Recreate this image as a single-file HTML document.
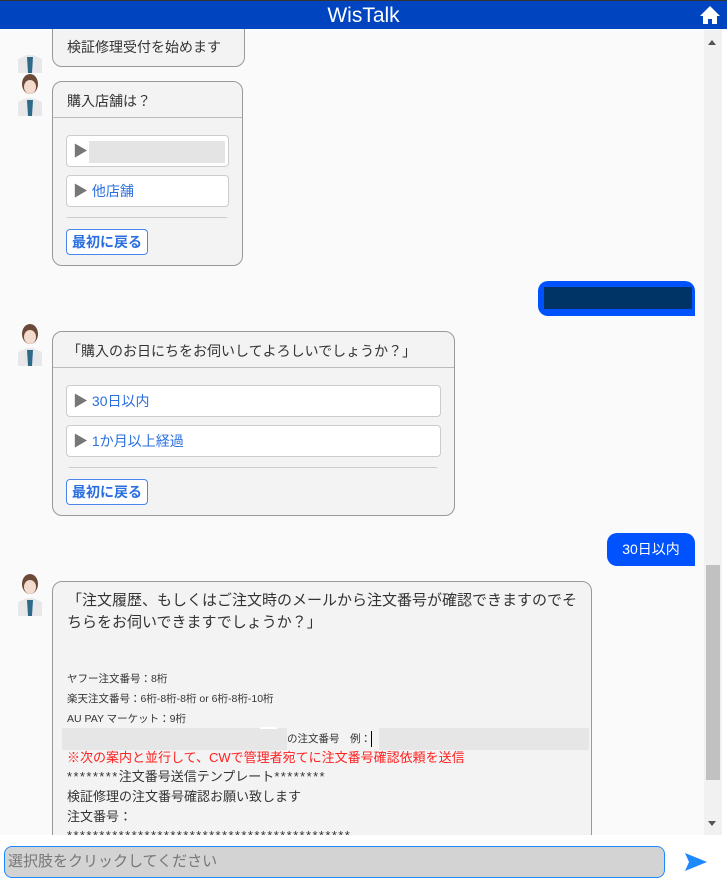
<!DOCTYPE html>
<html><head><meta charset="utf-8"><style>
*{box-sizing:border-box;margin:0;padding:0}
body{width:727px;height:893px;overflow:hidden;background:#fff;font-family:"Liberation Sans","Noto Sans CJK JP",sans-serif;position:relative;color:#333}
.hdr{position:absolute;left:0;top:0;width:727px;height:29px;background:#0044c0;color:#fff;text-align:center;font-size:21px;line-height:29px;border-top:1px solid #333}
.chat{position:absolute;left:0;top:29px;width:722px;height:806px;background:#fafafa;overflow:hidden}
.sb{position:absolute;left:704px;top:30px;width:18px;height:805px;background:#f1f1f1}
.thumb{position:absolute;left:706px;top:565px;width:14px;height:215px;background:#c1c1c1}
.a{position:absolute}
.av{position:absolute;width:30px;height:44px}
.bub{position:absolute;background:#f3f3f3;border:1px solid #999;border-radius:10px;font-size:14px;color:#333}
.opt{position:absolute;background:#fff;border:1px solid #ccc;border-radius:4px;height:32px;font-size:14px;color:#2a6fe0;line-height:30px;padding-left:6px}
.opt b{color:#777;font-weight:normal;font-size:15px}
.hr{position:absolute;height:1px;background:#ccc}
.back{position:absolute;border:1px solid #4a86ee;border-radius:4px;background:#fff;color:#2a6fe0;font-weight:bold;font-size:14px;padding:0 5px;height:26px;line-height:24px}
.sm{font-size:10.5px;line-height:20px}
.st{letter-spacing:1.4px}
</style></head><body>
<div class="hdr">WisTalk
<svg style="position:absolute;right:6px;top:4px" width="22" height="20" viewBox="0 0 22 20"><path d="M11 1L1 11h3v8h5v-5h4v5h5v-8h3z" fill="#fff"/></svg></div>
<div class="chat">
<svg class="av" style="left:15px;top:0px" viewBox="0 0 30 44"><path d="M3 44V30l9-4h6l9 4v14z" fill="#e8e8ea"/><path d="M12 28h6l-1 16h-4z" fill="#2d6a88"/></svg>
<div class="bub" style="left:52px;top:-10px;width:193px;height:48px;padding:17px 0 0 14px">検証修理受付を始めます</div>
<svg class="av" style="left:15px;top:43px" viewBox="0 0 30 44"><ellipse cx="15" cy="12" rx="8" ry="10" fill="#6b4a3a"/><ellipse cx="15" cy="15" rx="6" ry="7" fill="#f3dccd"/><path d="M3 44V30l9-4h6l9 4v14z" fill="#e8e8ea"/><path d="M12 28h6l-1 16h-4z" fill="#2d6a88"/></svg>
<div class="bub" style="left:52px;top:52px;width:191px;height:185px">
<div class="a" style="left:14px;top:9px">購入店舗は？</div>
<div class="hr" style="left:0;top:35px;width:189px;background:#bbb"></div>
<div class="opt" style="left:13px;top:53px;width:163px"><b>▶</b><span style="position:absolute;left:22px;top:5px;width:136px;height:22px;background:#e4e4e4"></span></div>
<div class="opt" style="left:13px;top:93px;width:163px"><b>▶</b> 他店舗</div>
<div class="hr" style="left:14px;top:135px;width:160px"></div>
<div class="back" style="left:13px;top:147px">最初に戻る</div>
</div>
<div class="a" style="left:538px;top:252px;width:157px;height:35px;background:#0052ff;border-radius:10px 10px 0 10px;padding:6px 3px 6px 6px"><div style="background:#003366;height:22px"></div></div>
<svg class="av" style="left:15px;top:293px" viewBox="0 0 30 44"><ellipse cx="15" cy="12" rx="8" ry="10" fill="#6b4a3a"/><ellipse cx="15" cy="15" rx="6" ry="7" fill="#f3dccd"/><path d="M3 44V30l9-4h6l9 4v14z" fill="#e8e8ea"/><path d="M12 28h6l-1 16h-4z" fill="#2d6a88"/></svg>
<div class="bub" style="left:52px;top:302px;width:403px;height:185px">
<div class="a" style="left:14px;top:9px">「購入のお日にちをお伺いしてよろしいでしょうか？」</div>
<div class="hr" style="left:0;top:35px;width:401px;background:#bbb"></div>
<div class="opt" style="left:13px;top:53px;width:375px"><b>▶</b> 30日以内</div>
<div class="opt" style="left:13px;top:93px;width:375px"><b>▶</b> 1か月以上経過</div>
<div class="hr" style="left:16px;top:135px;width:368px"></div>
<div class="back" style="left:13px;top:147px">最初に戻る</div>
</div>
<div class="a" style="left:607px;top:504px;width:88px;height:33px;background:#0052ff;border-radius:10px 10px 0 10px;color:#fff;font-size:14px;line-height:33px;text-align:center">30日以内</div>
<svg class="av" style="left:15px;top:543px" viewBox="0 0 30 44"><ellipse cx="15" cy="12" rx="8" ry="10" fill="#6b4a3a"/><ellipse cx="15" cy="15" rx="6" ry="7" fill="#f3dccd"/><path d="M3 44V30l9-4h6l9 4v14z" fill="#e8e8ea"/><path d="M12 28h6l-1 16h-4z" fill="#2d6a88"/></svg>
<div class="bub" style="left:52px;top:552px;width:540px;height:300px">
<div class="a" style="left:14px;top:8px;width:520px;font-size:15px;line-height:22px">「注文履歴、もしくはご注文時のメールから注文番号が確認できますのでそちらをお伺いできますでしょうか？」</div>
<div class="a sm" style="left:14px;top:87px">ヤフー注文番号：8桁</div>
<div class="a sm" style="left:14px;top:107px">楽天注文番号：6桁-8桁-8桁 or 6桁-8桁-10桁</div>
<div class="a sm" style="left:14px;top:127px">AU PAY マーケット：9桁</div>
<div class="a" style="left:9px;top:146px;width:527px;height:22px;background:#e6e6e6"><span style="position:absolute;left:198px;top:-1px;width:17px;height:2px;background:#fff"></span><span style="position:absolute;left:225px;top:0;width:92px;height:22px;background:#f3f3f3;font-size:10.5px;line-height:22px;padding-left:0">の注文番号　例：<span style="display:inline-block;width:1px;height:16px;background:#000;vertical-align:middle"></span></span></div>
<div class="a" style="left:14px;top:166px;color:#ff2020;font-size:13px;line-height:20px">※次の案内と並行して、CWで管理者宛てに注文番号確認依頼を送信</div>
<div class="a" style="left:14px;top:185px;font-size:13px;line-height:20px"><span class="st">********</span>注文番号送信テンプレート<span class="st">********</span></div>
<div class="a" style="left:14px;top:205px;font-size:13px;line-height:20px">検証修理の注文番号確認お願い致します</div>
<div class="a" style="left:14px;top:225px;font-size:13px;line-height:20px">注文番号：</div>
<div class="a st" style="left:14px;top:244px;font-size:13px;line-height:20px">********************************************</div>
</div>
</div>
<div class="sb"></div>
<div class="thumb"></div>
<div class="a" style="left:708px;top:40px;width:0;height:0;border:4px solid transparent;border-bottom:5px solid #555;border-top:0"></div>
<div class="a" style="left:708px;top:821px;width:0;height:0;border:4px solid transparent;border-top:5px solid #555;border-bottom:0"></div>
<div class="a" style="left:4px;top:846px;width:661px;height:32px;background:#d3d3d3;border:1px solid #1e88ff;border-radius:8px;font-size:15px;color:#777;line-height:30px;padding-left:3px">選択肢をクリックしてください</div>
<svg class="a" style="left:684px;top:852px" width="24" height="20" viewBox="0 0 24 20"><path d="M1 1L23 10L1 19L5 10z" fill="#1e88ff"/></svg>
</body></html>
